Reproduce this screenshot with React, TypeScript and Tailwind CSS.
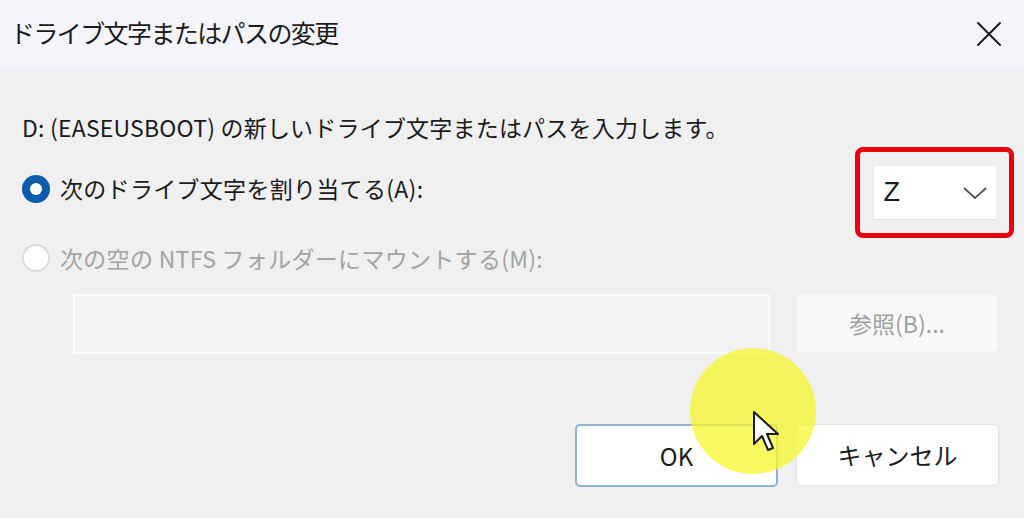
const font = "font-['Segoe_UI','Noto_Sans_CJK_JP',sans-serif]"

function Radio({ checked, disabled }: { checked?: boolean; disabled?: boolean }) {
  if (checked) {
    return (
      <span className="w-[28px] h-[28px] rounded-full bg-[#0b5cad] flex items-center justify-center shrink-0">
        <span className="w-[12px] h-[12px] rounded-full bg-white" />
      </span>
    )
  }
  return (
    <span
      className={`w-[28px] h-[28px] rounded-full bg-white border-2 shrink-0 ${
        disabled ? "border-[#dcdcdc]" : "border-[#555]"
      }`}
    />
  )
}

export default function App() {
  return (
    <div className={`relative w-[1024px] h-[518px] overflow-hidden bg-[#f0f0f0] text-[#1b1b1b] ${font}`}>
      {/* Title bar */}
      <div className="h-[68px] bg-[#f4f4fa] flex items-center justify-between pl-[10px] pr-[20px]">
        <span className="text-[25px] tracking-[-1.6px] pb-[2px]">ドライブ文字またはパスの変更</span>
        <svg width="26" height="26" viewBox="0 0 26 26" className="mr-[2px]">
          <path d="M2 2 L24 24 M24 2 L2 24" stroke="#1b1b1b" strokeWidth="2" strokeLinecap="round" />
        </svg>
      </div>

      {/* Body */}
      <div className="flex flex-col pl-[22px] pt-[43px]">
        <p className="text-[23px] leading-[32px] tracking-[0.2px]">
          D: (EASEUSBOOT) の新しいドライブ文字またはパスを入力します。
        </p>

        {/* Row 1 */}
        <div className="flex items-center justify-between h-[91px] mt-[4px] pr-[10px]">
          <label className="flex items-center gap-[10px] pb-[8px]">
            <Radio checked />
            <span className="text-[23px] tracking-[0.3px]">次のドライブ文字を割り当てる(A):</span>
          </label>
          <div className="w-[159px] h-[91px] border-[5px] border-[#e8000b] rounded-[8px] flex items-center justify-center">
            <div className="w-[122px] h-[53px] bg-white flex items-center justify-between pl-[10px] pr-[8px] shadow-[0_1px_0_#dedede]">
              <span className="text-[27px] font-['Liberation_Sans',sans-serif]">Z</span>
              <svg width="26" height="16" viewBox="0 0 26 16">
                <path d="M2 3 L13 13 L24 3" fill="none" stroke="#555" strokeWidth="1.8" />
              </svg>
            </div>
          </div>
        </div>

        {/* Row 2 */}
        <label className="flex items-center gap-[10px] h-[40px] text-[#a3a3a3]">
          <Radio disabled />
          <span className="text-[23px] tracking-[0.3px]">次の空の NTFS フォルダーにマウントする(M):</span>
        </label>

        {/* Row 3 */}
        <div className="flex gap-[26px] mt-[16px] pl-[51px]">
          <div className="w-[697px] h-[60px] bg-[#f2f2f2] border-2 border-[#fbfbfb]" />
          <button className="w-[202px] h-[58px] bg-[#f8f8f8] rounded-[4px] text-[23px] text-[#a0a0a0] border border-[#f3f3f3]">
            参照(B)...
          </button>
        </div>

        {/* Row 4 */}
        <div className="flex justify-end gap-[18px] mt-[70px] pr-[25px]">
          <button className="w-[203px] h-[63px] bg-white rounded-[5px] border-2 border-[#8fb1d4] text-[24px]">
            OK
          </button>
          <button className="w-[203px] h-[62px] bg-white rounded-[5px] border border-[#e3e3e3] text-[24px]">
            キャンセル
          </button>
        </div>
      </div>

      {/* Cursor highlight */}
      <div className="absolute left-[690px] top-[348px] w-[126px] h-[126px] rounded-full bg-[#f6f62c]/75" />
      <svg
        className="absolute left-[752px] top-[410px]"
        width="30"
        height="44"
        viewBox="0 0 30 44"
      >
        <path
          d="M2 2 L2 34 L10 26 L16 40 L21 38 L15 24 L26 24 Z"
          fill="white"
          stroke="#1b1b1b"
          strokeWidth="2"
          strokeLinejoin="round"
        />
      </svg>
    </div>
  )
}
